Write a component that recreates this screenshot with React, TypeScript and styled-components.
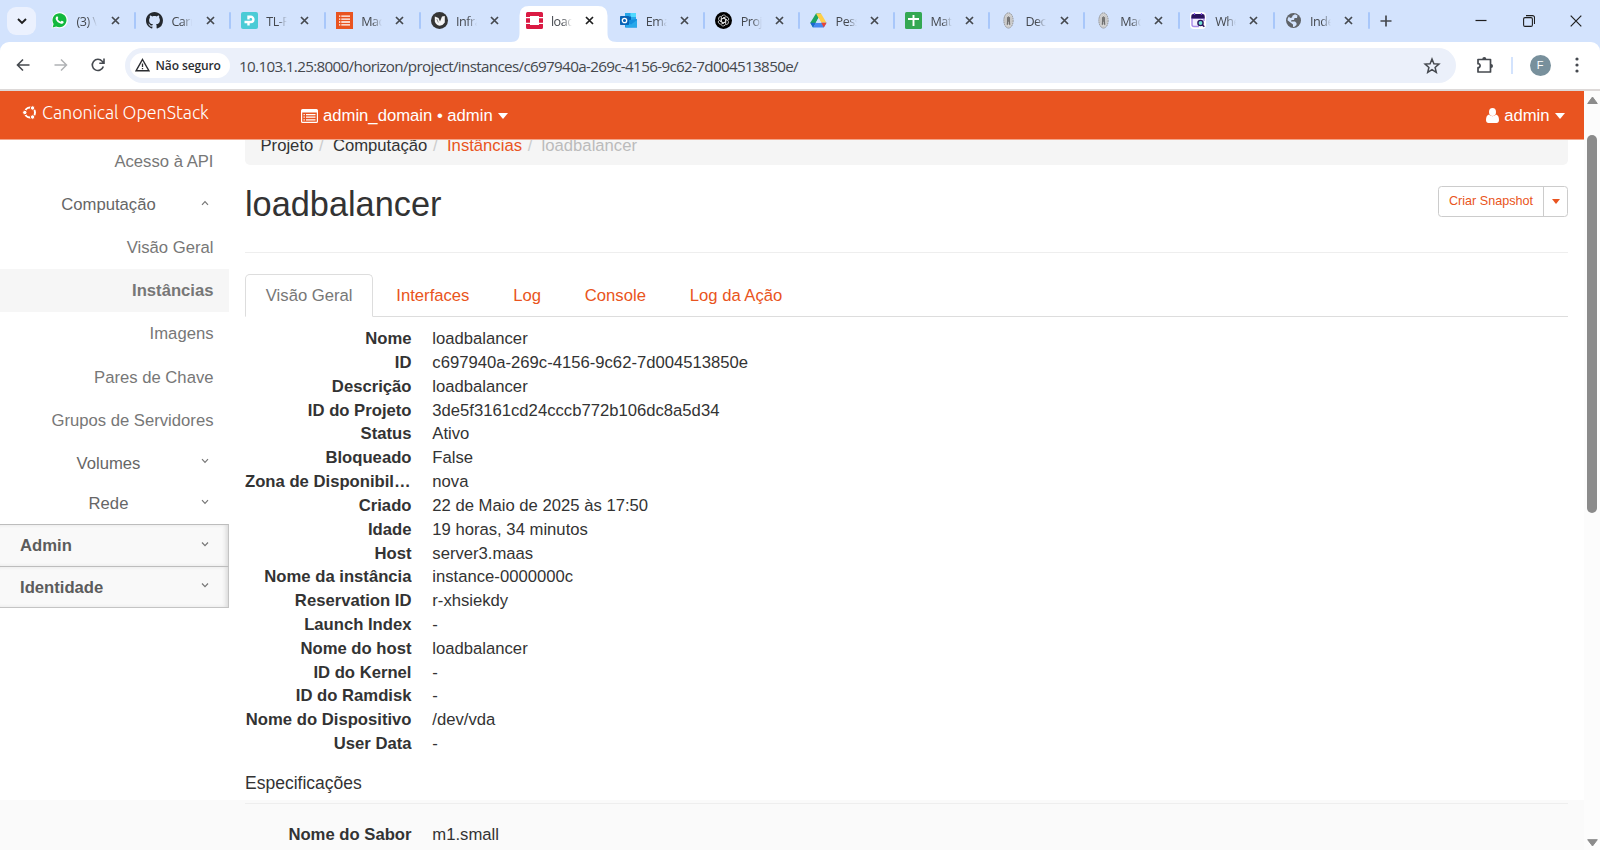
import React from 'react';
import styled, { createGlobalStyle } from 'styled-components';

const Global = createGlobalStyle`
  *{box-sizing:border-box}
  body{margin:0;background:#fff;overflow:hidden}
  svg{display:block;flex:none}
`;
const sans = `"Liberation Sans", Arial, sans-serif`;
const ui = `"Open Sans", "Noto Sans", sans-serif`;

const Window = styled.div`display:flex;flex-direction:column;width:1600px;height:850px;overflow:hidden;font-family:${sans};background:#d3e3fd;`;

/* browser frame */
const TabStrip = styled.div`display:flex;height:41.5px;flex:none;align-items:flex-start;`;
const TabSearch = styled.div`display:flex;align-items:center;justify-content:center;width:29px;height:28px;margin:7px 4.1px 0 7px;border-radius:9px;background:#ebf1fe;`;
const BrowserTab = styled.div`position:relative;display:flex;align-items:center;width:94.9px;height:35.5px;margin-top:6px;padding-left:11px;font:12.6px ${ui};letter-spacing:-.5px;color:#45494f;`;
const ActiveShape = styled.svg`position:absolute;left:-4px;top:0;`;
const TabDivider = styled.div`position:absolute;right:-1px;top:6px;width:2px;height:17px;border-radius:1px;background:#a8c7fa;`;
const Favicon = styled.div`position:relative;width:17px;height:17px;margin-bottom:6px;flex:none;`;
const TabTitle = styled.div`position:relative;width:21px;margin:0 13.2px 5px 8.4px;overflow:hidden;white-space:nowrap;mask-image:linear-gradient(90deg,#000 55%,transparent 100%);`;
const TabClose = styled.svg`position:relative;margin-bottom:6px;`;
const NewTab = styled.div`margin:15px 0 0 11.5px;`;
const WindowControls = styled.div`display:flex;gap:35.5px;margin:14.5px 18px 0 auto;`;

const Toolbar = styled.div`display:flex;align-items:center;height:49.5px;flex:none;padding:0 16px;border-radius:9px 9px 0 0;background:#fff;border-bottom:2px solid #ddd9d8;`;
const NavIcons = styled.div`display:flex;gap:23.5px;width:109px;`;
const Omnibox = styled.div`display:flex;align-items:center;width:1330.5px;height:35px;padding:0 15px 0 5px;border-radius:18px;background:#ebf0fa;`;
const SecurityChip = styled.div`display:flex;align-items:center;gap:5.5px;width:100px;height:24.5px;padding-left:5px;border-radius:13px;background:#fff;font:600 12px ${ui};letter-spacing:-.1px;color:#2b2d31;white-space:nowrap;`;
const Url = styled.div`flex:1;margin:1px 0 0 9px;font:15.2px ${ui};letter-spacing:-.66px;color:#45484d;white-space:nowrap;`;
const ToolSeparator = styled.div`width:2px;height:17px;margin:0 17px 0 17px;background:#d3e3fd;`;
const Avatar = styled.div`display:flex;align-items:center;justify-content:center;width:21px;height:21px;border-radius:50%;background:#78909c;color:#fff;font:11px ${sans};margin-right:24px;`;

/* page */
const Viewport = styled.div`display:flex;flex:1;min-height:0;background:#fff;`;
const Page = styled.div`display:flex;flex-direction:column;width:1584px;`;
const Header = styled.div`display:flex;height:48.5px;flex:none;padding-left:22px;background:#e95420;border-bottom:1px solid #f3a58a;color:#fff;font-size:16.67px;`;
const Brand = styled.div`display:flex;align-items:center;gap:4px;width:279px;padding-bottom:5.5px;font:300 18px Ubuntu, "Open Sans", sans-serif;white-space:nowrap;`;
const BrandName = styled.span`letter-spacing:-.06px;`;
const HeaderMenu = styled.div<{ $end?: boolean }>`display:flex;align-items:center;gap:5px;margin-left:${p => p.$end ? 'auto' : 0};padding:1.5px ${p => p.$end ? '19.5px' : 0} 0 0;white-space:nowrap;`;
const Body = styled.div`display:flex;flex:1;min-height:0;overflow:hidden;background:linear-gradient(#fff 660px,#fafafa 660px);`;
const Sidebar = styled.div`width:229px;padding-top:.6px;flex:none;font-size:16.67px;color:#777;`;
const NavItem = styled.div<{ $active?: boolean }>`display:flex;align-items:center;justify-content:flex-end;height:43.4px;padding:${p => p.$active ? 0 : '1px'} 15.5px 0 0;background:${p => p.$active ? '#f6f6f6' : 'transparent'};font-weight:${p => p.$active ? 700 : 400};`;
const NavGroup = styled.div<{ $h: number }>`display:grid;grid-template-columns:217px 12px;align-items:center;height:${p => p.$h}px;padding-top:1.6px;text-align:center;color:#666;`;
const GroupChevron = styled.svg`margin-left:-16px;margin-top:-5px;`;
const NavPanel = styled.div`display:flex;align-items:center;justify-content:space-between;height:42px;padding:1.2px 19px 0 20px;border-top:1px solid #bdbdbd;border-right:1px solid #c4c4c4;background:#f9f9f9;box-shadow:inset -3px 0 4px -1px #d9d9d9;color:#5c5c5c;font-weight:700;&:last-child{border-bottom:1.5px solid #c4c4c4;}`;
const PanelIcon = styled.svg`margin-top:-3px;`;
const Main = styled.main`width:1323px;margin-left:16px;font-size:16.67px;line-height:23.81px;color:#333;`;
const Breadcrumb = styled.div`display:flex;height:26px;padding-left:15.5px;margin-top:-.5px;border-radius:0 0 5px 5px;background:#f5f5f5;white-space:nowrap;`;
const Crumb = styled.span<{ $tone?: string }>`margin-top:-5.5px;color:${p => p.$tone || '#333'};&:not(:last-child)::after{content:'/';color:#ccc;margin:0 9.3px 0 5.7px;}`;
const TitleRow = styled.div`display:flex;align-items:flex-start;justify-content:space-between;height:88px;padding-top:21px;border-bottom:1.5px solid #eee;`;
const Title = styled.h1`margin:-1.5px 0 0;font-size:34.3px;line-height:39px;font-weight:400;`;
const SplitButton = styled.div`display:flex;height:31px;border:1.3px solid #ccc;border-radius:3.5px;color:#e95420;font-size:12.6px;line-height:28px;`;
const SplitLabel = styled.div`width:105px;text-align:center;border-right:1px solid #ccc;`;
const SplitCaret = styled.div`display:flex;align-items:center;justify-content:center;width:23px;`;
const Tabs = styled.div`display:flex;gap:2.4px;margin-top:21px;height:42.5px;border-bottom:1px solid #ddd;`;
const Tab = styled.div<{ $active?: boolean }>`height:42.5px;padding:9px 19.6px 9px 19.8px;border:1.2px solid ${p => p.$active ? '#ddd' : 'transparent'};border-bottom-color:${p => p.$active ? '#fff' : 'transparent'};border-radius:5px 5px 0 0;color:${p => p.$active ? '#777' : '#e95420'};white-space:nowrap;`;
const Details = styled.dl`display:grid;grid-template-columns:166.5px 1fr;column-gap:20.8px;margin:10.7px 0 0;`;
const Term = styled.dt`font-weight:700;text-align:right;overflow:hidden;text-overflow:ellipsis;white-space:nowrap;`;
const Value = styled.dd`margin:0;`;
const Section = styled.h4`margin:15.8px 0 0;height:32.5px;font-size:17.5px;font-weight:400;line-height:23.8px;border-bottom:1.5px solid #eee;`;
const Specs = styled(Details)`margin-top:18.5px;`;
const Scrollbar = styled.div`display:flex;flex-direction:column;align-items:center;width:16px;padding:5px 0 3px;background:#fcfcfc;`;
const Thumb = styled.div`width:9.5px;height:378px;margin:30.5px 0 auto;border-radius:5px;background:#8b8b8b;`;

const Caret = ({ w = 11, h = 6 }: { w?: number; h?: number }) => <svg width={w} height={h} viewBox="0 0 10 6" preserveAspectRatio="none"><path d="M0 0h10L5 6z" fill="currentColor" /></svg>;
const Chevron = ({ up }: { up?: boolean }) => <GroupChevron width="8" height="6" viewBox="0 0 8 6"><path d={up ? 'M1 4.8 4 1.6 7 4.8' : 'M1 1.2 4 4.4 7 1.2'} fill="none" stroke="#777" strokeWidth="1.2" /></GroupChevron>;
const PanelChevron = () => <PanelIcon width="8" height="10" viewBox="0 0 8 10"><path d="M1 2.5 4 5.7 7 2.5" fill="none" stroke="#777" strokeWidth="1.2" /></PanelIcon>;

const Seal = () => <><ellipse cx="8.5" cy="8.5" rx="4.6" ry="7.6" fill="#d5d5d5" stroke="#8d8d8d" strokeWidth="1" strokeDasharray="1.5 .6" /><ellipse cx="8.5" cy="8.5" rx="3" ry="5.5" fill="#ececec" stroke="#aaa" strokeWidth=".5" /><path d="M7 12.5V6.5Q7 4.5 8.5 4.5T10 6.5v6H9v-3H8v3z" fill="#777" stroke="#666" strokeWidth=".5" /></>;
const drawings: Record<string, React.ReactNode> = {
  whatsapp: <><path d="M.6 16.4 1.7 12A8 8 0 1 1 5 15.3z" fill="#fff" /><path d="M1.6 15.4 2.6 12A7 7 0 1 1 5.2 14.4z" fill="#12b83d" /><path d="M5.2 5c.8-1.2 1.5-.9 2 .8.2.6-.7 1-.5 1.4.7 1.3 1.6 2 2.8 2.5.5.1.8-1.2 1.4-.9 1.9.9 2 1 1.6 1.9-.5 1-1.9 1.4-3 .9C7 10.8 5.8 9.3 4.9 7.5c-.4-.9-.2-1.9.3-2.5z" fill="#fff" /></>,
  github: <path transform="scale(1.06)" d="M8 0C3.58 0 0 3.58 0 8c0 3.54 2.29 6.53 5.47 7.59.4.07.55-.17.55-.38 0-.19-.01-.82-.01-1.49-2.01.37-2.53-.49-2.69-.94-.09-.23-.48-.94-.82-1.13-.28-.15-.68-.52-.01-.53.63-.01 1.08.58 1.23.82.72 1.21 1.87.87 2.33.66.07-.52.28-.87.51-1.07-1.78-.2-3.64-.89-3.64-3.95 0-.87.31-1.59.82-2.15-.08-.2-.36-1.02.08-2.12 0 0 .67-.21 2.2.82.64-.18 1.32-.27 2-.27s1.36.09 2 .27c1.53-1.04 2.2-.82 2.2-.82.44 1.1.16 1.92.08 2.12.51.56.82 1.27.82 2.15 0 3.07-1.87 3.75-3.65 3.95.29.25.54.73.54 1.48 0 1.07-.01 1.93-.01 2.2 0 .21.15.46.55.38A8 8 0 0 0 16 8c0-4.42-3.58-8-8-8z" fill="#24292f" />,
  tplink: <><rect width="17" height="17" rx="2" fill="#4acbd6" /><path d="M7.5 13.5v-3.3M7.5 7.5V4.8h2.3a2.6 2.6 0 0 1 0 5.2H3.5" fill="none" stroke="#fff" strokeWidth="2.4" /></>,
  maas: <><path fill="#e95420" d="M0 0h17v17H0z" /><path d="M3 4.2h1.3M5.3 4.2H14M3 7.1h1.3M5.3 7.1H14M3 10h1.3M5.3 10H14M3 12.9h1.3M5.3 12.9H14" stroke="#fff" strokeWidth="1.3" /></>,
  infra: <><circle cx="8.5" cy="8.5" r="8.5" fill="#353535" /><path d="M3.8 4.500 7.500 6l1.500 3.500L11 4.500l2.800-.5v6.500Q12 13.500 8.700 13.800 4.800 13 3.800 9.500z" fill="#f5f5f5" /><path d="m5.800 7 1.500 3.500" fill="none" stroke="#777" strokeWidth=".8" /></>,
  openstack: <path d="M1.5 0h14A1.5 1.5 0 0 1 17 1.5V5h-4V4H4v1H0V1.5A1.5 1.5 0 0 1 1.5 0zM0 6.3h4v4.4H0zM13 6.3h4v4.4h-4zM0 12h4v1h9v-1h4v3.5a1.5 1.5 0 0 1-1.5 1.5h-14A1.5 1.5 0 0 1 0 15.5z" fill="#da1a43" />,
  outlook: <><path d="M5 1h11v8H5z" fill="#28a8ea" /><path d="M10.5 1H16v4h-5.5z" fill="#50d9ff" /><path d="M5 4.5h6V9H5z" fill="#0364b8" /><path d="M5 8.5 17 7v8.5H5z" fill="#1490df" /><path d="m5 9 6 3.5L17 8v7.5H6z" fill="#28a8ea" /><rect y="4" width="9" height="9" rx=".8" fill="#0a63b5" /><circle cx="4.5" cy="8.5" r="2.2" fill="none" stroke="#fff" strokeWidth="1.3" /></>,
  gpt: <><circle cx="8.5" cy="8.5" r="8.5" fill="#000" /><g fill="none" stroke="#ddd" strokeWidth=".8">{[0, 60, 120, 180, 240, 300].map(a => <path key={a} transform={`rotate(${a} 8.5 8.5)`} d="M6.4 9.8V5.2a2.4 2.4 0 0 1 4.4-1.1M6.4 7.2 8.5 6l3.7 2.1" />)}</g></>,
  drive: <><path d="M6 1.5h5L5.6 11 3 15.5.3 10.8z" fill="#1da462" /><path d="M6 1.5h5l5.5 9.3h-5.2z" fill="#ffcf48" /><path d="M5.8 10.8h10.7L13.8 15.5H3z" fill="#4688f1" /><path d="m.3 10.8 2.7 4.7 2.8-4.7z" fill="#1967d2" /><path d="M11.3 10.8h5.2l-2.7 4.7z" fill="#ea4335" /><path d="M8.5 6 5.8 10.8h5.5z" fill="#d3e3fd" /></>,
  sheets: <><rect width="17" height="17" rx="1.5" fill="#34a853" /><path d="M8.5 3v11M3 7h11" stroke="#fff" strokeWidth="1.9" /></>,
  seal: <Seal />,
  when: <><rect width="16" height="17" rx="4" fill="#fff" /><path d="M9 14.5H4a2 2 0 0 1-2-2V6h12v3" fill="#f3efff" stroke="#a98be8" strokeWidth="1.4" /><path d="M1.3 4A2 2 0 0 1 3.3 2h9.4a2 2 0 0 1 2 2v2.5H1.3z" fill="#29145c" /><path d="M4.5 1v2M11.5 1v2" stroke="#7d4ee0" strokeWidth="1.3" /><circle cx="10.5" cy="11" r="2.6" fill="#6fe0d0" stroke="#29145c" strokeWidth="1.4" /><path d="m12.5 13 1.8 1.8" stroke="#29145c" strokeWidth="1.6" /></>,
  globe: <><circle cx="8.5" cy="8.5" r="7.5" fill="#5f6368" /><path d="M10 2.3 12.5 3.5l-.5 2.5H9.5L9 8H6.5L6 9.5h4l1.5 1.5v2l-2 1.8L8 15v-2.5L2.5 8.3Q2.5 6 4 4.5l1 1.5 2-.5.5-1.8z" fill="#d3e3fd" /></>,
};
const tabs: [string, string][] = [['whatsapp', '(3) \\'], ['github', 'Carr'], ['tplink', 'TL-F'], ['maas', 'Mac'], ['infra', 'Infra'], ['openstack', 'load'], ['outlook', 'Ema'], ['gpt', 'Proj'], ['drive', 'Pess'], ['sheets', 'Mat'], ['seal', 'Dec'], ['seal', 'Mac'], ['when', 'Whe'], ['globe', 'Inde']];
const details: [string, string][] = [['Nome', 'loadbalancer'], ['ID', 'c697940a-269c-4156-9c62-7d004513850e'], ['Descrição', 'loadbalancer'], ['ID do Projeto', '3de5f3161cd24cccb772b106dc8a5d34'], ['Status', 'Ativo'], ['Bloqueado', 'False'], ['Zona de Disponibilidade', 'nova'], ['Criado', '22 de Maio de 2025 às 17:50'], ['Idade', '19 horas, 34 minutos'], ['Host', 'server3.maas'], ['Nome da instância', 'instance-0000000c'], ['Reservation ID', 'r-xhsiekdy'], ['Launch Index', '-'], ['Nome do host', 'loadbalancer'], ['ID do Kernel', '-'], ['ID do Ramdisk', '-'], ['Nome do Dispositivo', '/dev/vda'], ['User Data', '-']];

const PuzzleIcon = styled.svg`margin-left:20px;`;

export default function App() {
  return <Window>
    <Global />
    <TabStrip>
      <TabSearch><svg width="10" height="8" viewBox="0 0 10 8"><path d="m1 2 4 4L9 2" fill="none" stroke="#1f1f1f" strokeWidth="1.9" /></svg></TabSearch>
      {tabs.map(([icon, name], i) => <BrowserTab key={i}>
        {i === 5 && <ActiveShape width="106" height="36" viewBox="0 0 106 36"><path d="M0 36c6 0 8.5-3 8.5-9V9.5Q8.5 0 18 0h69q9.5 0 9.5 9.5V27c0 6 2.5 9 9.5 9z" fill="#fff" /></ActiveShape>}
        <Favicon><svg width="17" height="17" viewBox="0 0 17 17">{drawings[icon]}</svg></Favicon>
        <TabTitle>{name}</TabTitle>
        <TabClose width="9" height="9" viewBox="0 0 9 9"><path d="m1 1 7 7M8 1 1 8" stroke={i === 5 ? '#1f1f1f' : '#45494f'} strokeWidth="1.7" /></TabClose>
        {i !== 4 && i !== 5 && <TabDivider />}
      </BrowserTab>)}
      <NewTab><svg width="12" height="12" viewBox="0 0 12 12"><path d="M6 .5v11M.5 6h11" stroke="#45494f" strokeWidth="1.7" /></svg></NewTab>
      <WindowControls>
        <svg width="12" height="12" viewBox="0 0 12 12"><path d="M.5 5.5h11" stroke="#1f1f1f" strokeWidth="1.2" /></svg>
        <svg width="12" height="12" viewBox="0 0 12 12"><path d="M.6 4A1.4 1.4 0 0 1 2 2.6h6A1.4 1.4 0 0 1 9.4 4v6A1.4 1.4 0 0 1 8 11.4H2A1.4 1.4 0 0 1 .6 10zM3 .6h6.5a2 2 0 0 1 2 2V9" fill="none" stroke="#1f1f1f" strokeWidth="1.1" /></svg>
        <svg width="12" height="12" viewBox="0 0 12 12"><path d="m.7.7 10.6 10.6M11.3.7.7 11.3" stroke="#1f1f1f" strokeWidth="1.2" /></svg>
      </WindowControls>
    </TabStrip>
    <Toolbar>
      <NavIcons>
        <svg width="14" height="14" viewBox="0 0 14 14"><path d="M13.5 7H1.5M7 1.500 1.500 7 7 12.500" fill="none" stroke="#45494f" strokeWidth="1.6" /></svg>
        <svg width="14" height="14" viewBox="0 0 14 14"><path d="M.5 7h12M7 1.500 12.500 7 7 12.500" fill="none" stroke="#b0b2b5" strokeWidth="1.5" /></svg>
        <svg width="14" height="14" viewBox="0 0 14 14"><path d="M12.3 8.5A5.6 5.6 0 1 1 11.2 3.3L12.8 5M13 .5V5.2H8.3" fill="none" stroke="#45494f" strokeWidth="1.6" /></svg>
      </NavIcons>
      <Omnibox>
        <SecurityChip><svg width="15" height="14" viewBox="0 0 15 14"><path d="M7.5 1.5 14 12.8H1z" fill="none" stroke="#2b2d31" strokeWidth="1.4" /><path d="M7.5 5.5v3.5M7.5 10v1.3" stroke="#2b2d31" strokeWidth="1.3" /></svg>Não seguro</SecurityChip>
        <Url>10.103.1.25:8000/horizon/project/instances/c697940a-269c-4156-9c62-7d004513850e/</Url>
        <svg width="18" height="17" viewBox="0 0 18 17"><path d="m9 2 1.9 4.7 5 .4-3.8 3.3 1.2 4.9L9 12.6l-4.3 2.7 1.2-4.9L2.1 7.1l5-.4z" fill="none" stroke="#45494f" strokeWidth="1.5" /></svg>
      </Omnibox>
      <PuzzleIcon width="18" height="18" viewBox="0 0 18 18"><path d="M2 3.5h12.5v12.5H2v-4.3c2.8 0 2.8-4 0-4z" fill="none" stroke="#45494f" strokeWidth="1.7" strokeLinejoin="round" /><path d="M6.3 3a2 2 0 0 1 4 0zM15 8a2 2 0 0 1 0 4z" fill="#45494f" /></PuzzleIcon>
      <ToolSeparator />
      <Avatar>F</Avatar>
      <svg width="4" height="16" viewBox="0 0 4 16"><g fill="#45494f"><circle cx="2" cy="2" r="1.6" /><circle cx="2" cy="8" r="1.6" /><circle cx="2" cy="14" r="1.6" /></g></svg>
    </Toolbar>
    <Viewport>
      <Page>
        <Header>
          <Brand>
            <svg width="16" height="15" viewBox="0 0 16 15"><circle cx="8" cy="7.5" r="5" fill="none" stroke="#fff" strokeWidth="2" /><g fill="#fff" stroke="#e95420" strokeWidth="1"><circle cx="2.8" cy="7.5" r="2.2" /><circle cx="10.6" cy="3" r="2.2" /><circle cx="10.6" cy="12" r="2.2" /></g></svg>
            <BrandName>Canonical OpenStack</BrandName>
          </Brand>
          <HeaderMenu>
            <svg width="17" height="14" viewBox="0 0 17 14"><path fillRule="evenodd" d="M1.5 0h14A1.5 1.5 0 0 1 17 1.5v11a1.5 1.5 0 0 1-1.5 1.5h-14A1.5 1.5 0 0 1 0 12.5v-11A1.5 1.5 0 0 1 1.5 0zM1.2 3.6v9.2h14.6V3.6z" fill="#fff" /><path d="M2.5 5.6h1.3M5 5.6h9.5M2.5 8.2h1.3M5 8.2h9.5M2.5 10.8h1.3M5 10.8h9.5" stroke="#fff" strokeWidth="1.3" /></svg>
            <span>admin_domain • admin</span><Caret w={10} h={6} />
          </HeaderMenu>
          <HeaderMenu $end>
            <svg width="13" height="15" viewBox="0 0 13 15"><ellipse cx="6.5" cy="4" rx="3.5" ry="4" fill="#fff" /><path d="M3 6.5C1 7 0 9 0 12c0 2 1 3 2.5 3h8c1.5 0 2.5-1 2.5-3 0-3-1-5-3-5.5-2 2.3-5 2.3-7 0z" fill="#fff" /></svg>
            <span>admin</span><Caret w={10} h={6} />
          </HeaderMenu>
        </Header>
        <Body>
          <Sidebar>
            <NavItem>Acesso à API</NavItem>
            <NavGroup $h={42}><span>Computação</span><Chevron up /></NavGroup>
            <NavItem>Visão Geral</NavItem>
            <NavItem $active>Instâncias</NavItem>
            <NavItem>Imagens</NavItem>
            <NavItem>Pares de Chave</NavItem>
            <NavItem>Grupos de Servidores</NavItem>
            <NavGroup $h={41}><span>Volumes</span><Chevron /></NavGroup>
            <NavGroup $h={40.5}><span>Rede</span><Chevron /></NavGroup>
            <NavPanel>Admin<PanelChevron /></NavPanel>
            <NavPanel>Identidade<PanelChevron /></NavPanel>
          </Sidebar>
          <Main>
            <Breadcrumb><Crumb>Projeto</Crumb><Crumb>Computação</Crumb><Crumb $tone="#e95420">Instâncias</Crumb><Crumb $tone="#bbb">loadbalancer</Crumb></Breadcrumb>
            <TitleRow>
              <Title>loadbalancer</Title>
              <SplitButton><SplitLabel>Criar Snapshot</SplitLabel><SplitCaret><Caret w={8} h={5} /></SplitCaret></SplitButton>
            </TitleRow>
            <Tabs><Tab $active>Visão Geral</Tab><Tab>Interfaces</Tab><Tab>Log</Tab><Tab>Console</Tab><Tab>Log da Ação</Tab></Tabs>
            <Details>{details.map(([k, v]) => <React.Fragment key={k}><Term>{k}</Term><Value>{v}</Value></React.Fragment>)}</Details>
            <Section>Especificações</Section>
            <Specs><Term>Nome do Sabor</Term><Value>m1.small</Value></Specs>
          </Main>
        </Body>
      </Page>
      <Scrollbar>
        <svg width="11" height="8" viewBox="0 0 11 8"><path d="M5.5 1 10.3 7.5H.7z" fill="#8b8b8b" stroke="#8b8b8b" strokeLinejoin="round" /></svg>
        <Thumb />
        <svg width="11" height="8" viewBox="0 0 11 8"><path d="M5.5 7 10.3.7H.7z" fill="#8b8b8b" stroke="#8b8b8b" strokeLinejoin="round" /></svg>
      </Scrollbar>
    </Viewport>
  </Window>;
}
